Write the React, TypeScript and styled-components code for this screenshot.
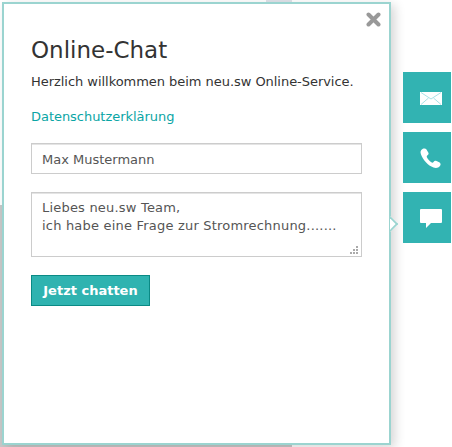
import React from "react";
import styled, { createGlobalStyle } from "styled-components";

const Global = createGlobalStyle`
  html, body { margin: 0; padding: 0; background: #fff; overflow: hidden; }
  body { font-family: "DejaVu Sans", Verdana, sans-serif; }
`;
const Page = styled.div`
  position: relative; width: 452px; height: 447px; display: flex; align-items: flex-start;
  padding: 2px 0 0 2px; box-sizing: border-box; overflow: hidden;
`;
const BackdropBlock = styled.div`
  position: absolute; left: 0; top: 205px; width: 292px; height: 242px; background: #c9c9c9;
`;
const BackdropTab = styled.div`
  position: absolute; left: 266px; top: 0; width: 26px; height: 2px; background: #dfe3ea;
`;
const Panel = styled.section`
  position: relative; width: 389px; height: 443px; box-sizing: border-box; flex: none;
  background: #fff; border: 2px solid #9bd4d0; padding: 32px 27px 0;
  box-shadow: 4px 3px 10px rgba(0,0,0,.16);
`;
const Close = styled.svg`
  position: absolute; right: 8px; top: 8px; width: 15px; height: 15px;
`;
const Arrow = styled.span`
  position: absolute; left: 380px; top: 214px; width: 12px; height: 12px; box-sizing: border-box;
  background: #fff; border-top: 2px solid #9bd4d0; border-right: 2px solid #9bd4d0;
  transform: rotate(45deg); clip-path: polygon(0 0, 100% 0, 100% 100%);
`;
const Title = styled.h1`
  margin: 0; font-size: 23px; line-height: 28px; font-weight: 400; color: #333;
`;
const Intro = styled.p`
  margin: 8px 0 0; font-size: 13px; line-height: 20px; color: #333; letter-spacing: -0.04px;
`;
const Privacy = styled.a`
  display: block; margin-top: 15px; font-size: 13px; line-height: 20px; color: #0aa5a5;
  text-decoration: none; letter-spacing: -0.04px;
`;
const Field = styled.input`
  display: block; box-sizing: border-box; width: 331px; height: 31px; margin-top: 16px; padding: 2px 10px 0;
  border: 1px solid #ccc; box-shadow: inset 0 1px 0 #e4e4e4; outline: none; background: #fff; color: #555;
  font: 13px "DejaVu Sans", Verdana, sans-serif;
`;
const MessageBox = styled.div`
  position: relative; width: 331px; height: 65px; margin-top: 18px;
`;
const Message = styled.textarea`
  display: block; box-sizing: border-box; width: 100%; height: 100%; margin: 0; padding: 6px 10px;
  border: 1px solid #ccc; box-shadow: inset 0 1px 0 #e4e4e4; outline: none; background: #fff; color: #555;
  font: 13px/18px "DejaVu Sans", Verdana, sans-serif; letter-spacing: .2px; resize: none;
`;
const Grip = styled.svg`
  position: absolute; right: 3px; bottom: 2px; width: 9px; height: 9px;
`;
const Submit = styled.button`
  display: block; box-sizing: border-box; width: 119px; height: 31px; margin-top: 18px; padding: 0;
  background: #2fb3b0; border: 1px solid #0a8a85; color: #fff;
  font: 700 13px "DejaVu Sans", Verdana, sans-serif;
`;
const Side = styled.nav`
  position: relative; display: flex; flex-direction: column; gap: 9px; margin: 70px 0 0 12px; flex: none;
`;
const SideButton = styled.a`
  width: 48px; height: 51px; background: #32b3b2; display: flex; align-items: center;
  padding-left: 17px; box-sizing: border-box; padding-top: 2px;
`;

export default function App() {
  return (
    <Page>
      <Global />
      <BackdropBlock />
      <BackdropTab />
      <Panel>
        <Close viewBox="0 0 15 15" aria-label="Schließen">
          <path d="M2.500 2.500 12.500 12.500M12.500 2.500 2.500 12.500" stroke="#999" strokeWidth="4" strokeLinecap="round" />
        </Close>
        <Title>Online-Chat</Title>
        <Intro>Herzlich willkommen beim neu.sw Online-Service.</Intro>
        <Privacy href="#">Datenschutzerklärung</Privacy>
        <Field defaultValue="Max Mustermann" />
        <MessageBox>
          <Message defaultValue={"Liebes neu.sw Team,\nich habe eine Frage zur Stromrechnung......."} />
          <Grip viewBox="0 0 9 9">
            <path d="M6 0h2v2H6zM3 3h2v2H3zM6 3h2v2H6zM0 6h2v2H0zM3 6h2v2H3zM6 6h2v2H6z" fill="#aaa" />
          </Grip>
        </MessageBox>
        <Submit>Jetzt chatten</Submit>
        <Arrow />
      </Panel>
      <Side>
        <SideButton href="#" aria-label="E-Mail">
          <svg width="22" height="14" viewBox="0 0 22 14">
            <rect width="22" height="13" fill="#fff" />
            <path d="M1 .5 11 7 21 .5M1 12.500 8.500 6M21 12.500 13.500 6" fill="none" stroke="#a9e2e6" strokeWidth="1" />
          </svg>
        </SideButton>
        <SideButton href="#" aria-label="Telefon">
          <svg width="21" height="21" viewBox="0 0 21 21">
            <path d="M2.500 1 C.5 2 0 4 1 6.500 C3 12 8 17.500 13.500 19.500 C16.500 20.500 19.500 19.500 20.500 17 C20.800 15.800 20.300 15 19.200 14.300 L16.500 13 C15.300 12.500 14.300 12.800 13.700 13.800 C13 14.800 12.300 15 11.300 14.300 C9.500 13.100 7.800 11 7 9.500 C6.500 8.500 6.800 7.800 7.800 7 C8.600 6.300 8.800 5.800 8.400 4.800 L6.500 1.500 C5.800 .4 4 .2 2.500 1 Z" fill="#fff" />
          </svg>
        </SideButton>
        <SideButton href="#" aria-label="Chat">
          <svg width="22" height="19" viewBox="0 0 22 19">
            <path d="M1 0H21A1 1 0 0 1 22 1V13A1 1 0 0 1 21 14H11L6 19V14H1A1 1 0 0 1 0 13V1A1 1 0 0 1 1 0Z" fill="#fff" />
          </svg>
        </SideButton>
      </Side>
    </Page>
  );
}
